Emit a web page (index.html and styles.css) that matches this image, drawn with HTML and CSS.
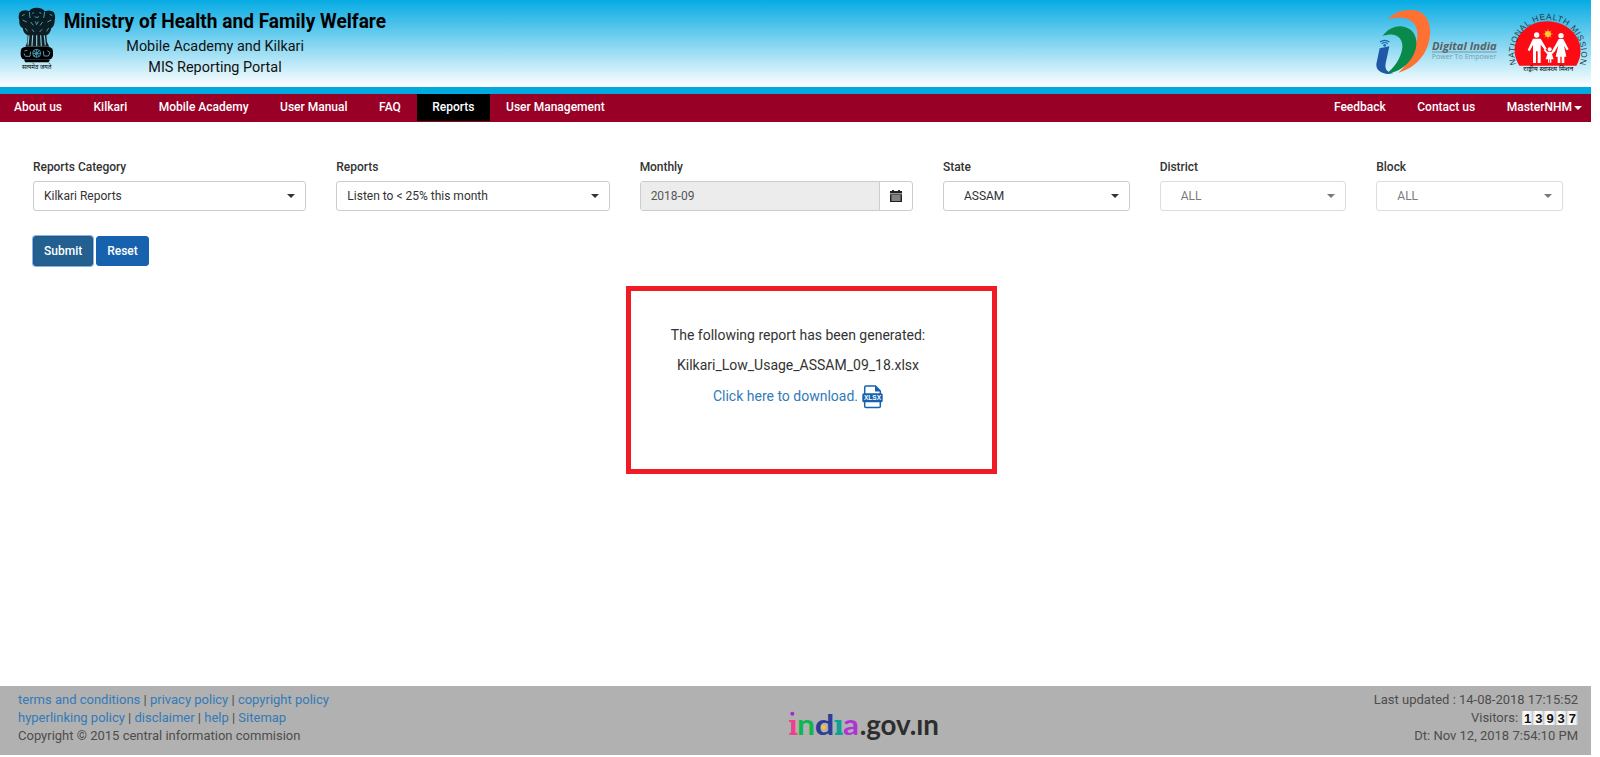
FILE: index.html
```html
<!DOCTYPE html>
<html lang="en">
<head>
<meta charset="utf-8">
<title>MIS Reporting Portal</title>
<link rel="stylesheet" href="styles.css">
</head>
<body>
<div class="page">
  <header class="banner">
    <svg class="brand" viewBox="0 0 1200 261" role="img" aria-label="Ministry of Health and Family Welfare">
      <g class="emblem">
        <path d="M88 34 Q92 23 110 23 Q128 23 134 34 Q150 28 161 36 Q168 48 164 62 Q164 78 154 84 Q150 104 139 106 L141 126 L148 140 L76 140 L82 126 L83 106 Q71 102 68 84 Q56 78 58 62 Q53 48 60 36 Q72 27 88 34Z" opacity=".85"/>
        <path d="M87 106 L84 136 M98 106 L96 138 M110 106 L110 138 M122 106 L124 138 M133 106 L136 136" class="gap"/>
        <path d="M97 40 L102 38 M118 38 L124 40 M104 50 Q110 55 117 50 M66 47 L74 43 M149 43 L157 47 M68 60 L80 66 M154 60 L142 66 M92 66 L100 76 M128 66 L120 76 M106 64 L110 74 L115 64 M88 36 L90 54 M134 36 L131 54 M76 84 L82 94 M146 84 L140 94 M96 88 L102 96 M126 88 L119 96" class="mark"/>
        <rect x="62" y="141" width="97" height="38" rx="14"/>
        <path d="M72 179 H150 L146 187 H76Z"/>
        <circle cx="110" cy="160" r="12" class="mark"/>
        <path d="M110 149 V171 M99 160 H121 M102 152 L118 168 M118 152 L102 168 M73 153 L82 151 M72 160 L76 169 L90 169 L92 155 M130 153 L132 168 L145 168 L150 158 L142 152" class="mark"/>
      </g>
      <text x="110" y="208" class="motto" textLength="88" lengthAdjust="spacingAndGlyphs" text-anchor="middle">सत्यमेव जयते</text>
      <text x="191" y="84" class="t1" textLength="967" lengthAdjust="spacingAndGlyphs">Ministry of Health and Family Welfare</text>
      <text x="379" y="154" class="t2" textLength="533" lengthAdjust="spacingAndGlyphs">Mobile Academy and Kilkari</text>
      <text x="445" y="216" class="t2" textLength="400" lengthAdjust="spacingAndGlyphs">MIS Reporting Portal</text>
    </svg>
    <svg class="partners" viewBox="0 0 723 261" role="img" aria-label="Digital India, National Health Mission">
      <path fill="#ff7033" d="M115 57 C132 37 165 27 194 31 C228 37 242 66 240 103 C237 152 205 202 145 218 C180 188 200 146 202 105 C203 70 180 43 115 57Z"/>
      <path fill="#098a4b" d="M98 108 C112 88 133 78 153 79 C184 82 202 104 199 134 C194 181 153 217 107 222 C132 205 153 175 157 143 C160 113 137 94 98 108Z"/>
      <path fill="#2057a7" d="M89 145 L118 139 L107 190 C104 207 109 216 130 220 C100 226 77 213 79 192Z"/>
      <path d="M90 126 Q104 116 118 126 M95 131 Q104 124 113 131" fill="none" stroke="#1c64af" stroke-width="3.5"/>
      <circle cx="104" cy="136" r="4" fill="#1c64af"/>
      <text x="246" y="151" class="di" textLength="194" lengthAdjust="spacingAndGlyphs">Digital India</text>
      <path d="M246 156 H440" stroke="#69767b" stroke-width="2"/>
      <text x="245" y="178" class="pe" textLength="194" lengthAdjust="spacingAndGlyphs">Power To Empower</text>
      <path fill="#fd0b14" d="M508 197 C468 135 517 64 592 64 C667 64 716 135 679 197Z"/>
      <circle cx="594" cy="102" r="9" fill="#ffd52b"/>
      <path d="M594 88 V116 M580 102 H608 M584 92 L604 112 M604 92 L584 112" stroke="#ffc72c" stroke-width="2"/>
      <g fill="#fff">
        <circle cx="560" cy="105" r="8"/><circle cx="633" cy="107" r="8"/><circle cx="599" cy="148" r="6"/>
        <path d="M549 116 H572 L590 146 L585 150 L572 134 V189 H563 V154 H558 V189 H549 V134 L539 154 L533 150Z"/>
        <path d="M626 117 H640 L656 148 L650 151 L642 137 L649 170 H643 V189 H635 V170 H631 V189 H623 V170 H617 L625 137 L612 157 L606 153Z"/>
        <path d="M593 155 H605 L614 147 L617 151 L606 163 L611 178 H604 V188 H600 V178 H598 V188 H594 V178 H587 L592 163 L581 151 L584 147Z"/>
      </g>
      <path id="arc" fill="none" d="M498 193 A100 104 0 1 1 690 190"/>
      <text class="nhm"><textPath href="#arc" textLength="382" lengthAdjust="spacing">NATIONAL HEALTH MISSION</textPath></text>
      <text x="595" y="213" class="hindi" text-anchor="middle" textLength="150" lengthAdjust="spacingAndGlyphs">राष्ट्रीय स्वास्थ्य मिशन</text>
    </svg>
  </header>

  <nav class="nav">
    <a>About us</a><a>Kilkari</a><a>Mobile Academy</a><a>User Manual</a><a>FAQ</a><a class="active">Reports</a><a>User Management</a>
    <span class="spacer"></span>
    <a>Feedback</a><a>Contact us</a><a class="user">MasterNHM<i class="caret"></i></a>
  </nav>

  <main>
    <form class="filters">
      <div class="field"><label>Reports Category</label><div class="select"><span>Kilkari Reports</span><i class="caret"></i></div></div>
      <div class="field"><label>Reports</label><div class="select"><span>Listen to &lt; 25% this month</span><i class="caret"></i></div></div>
      <div class="field"><label>Monthly</label>
        <div class="select date"><span class="value">2018-09</span>
          <span class="addon"><svg width="12" height="12" viewBox="0 0 12 12"><path fill="#222" d="M0 1H2V0H4V1H8V0H10V1H12V3.5H0Z M0 4.3H12V12H0Z"/><path fill="none" stroke="#fff" stroke-width=".5" d="M1 6H11M1 8H11M1 10H11M3 5V11M5 5V11M7 5V11M9 5V11"/></svg></span>
        </div>
      </div>
      <div class="field"><label>State</label><div class="select indent"><span>ASSAM</span><i class="caret"></i></div></div>
      <div class="field"><label>District</label><div class="select indent disabled"><span>ALL</span><i class="caret"></i></div></div>
      <div class="field"><label>Block</label><div class="select indent disabled"><span>ALL</span><i class="caret"></i></div></div>
    </form>
    <div class="actions"><button class="btn submit">Submit</button><button class="btn">Reset</button></div>

    <section class="result">
      <p>The following report has been generated:</p>
      <p>Kilkari_Low_Usage_ASSAM_09_18.xlsx</p>
      <p class="download"><a>Click here to download.</a>
        <svg width="21" height="24" viewBox="0 0 21 24"><path d="M2.7 9V2.2Q2.7 1 4 1H13.5L18.3 6V9M2.7 16V21.5Q2.7 22.5 4 22.5H17Q18.3 22.5 18.3 21.5V16" fill="none" stroke="#1762ae" stroke-width="1.5"/><path d="M13 .5V6.5H19Z" fill="#1762ae"/><rect x=".3" y="8.3" width="20.4" height="9" rx="1.5" fill="#1762ae"/><text x="10.5" y="15.3" text-anchor="middle" class="xl" textLength="17" lengthAdjust="spacing">XLSX</text></svg>
      </p>
    </section>
  </main>

  <footer class="footer">
    <div class="links">
      <div><a>terms and conditions</a> | <a>privacy policy</a> | <a>copyright policy</a></div>
      <div><a>hyperlinking policy</a> | <a>disclaimer</a> | <a>help</a> | <a>Sitemap</a></div>
      <div>Copyright © 2015 central information commision</div>
    </div>
    <svg class="gov" viewBox="0 0 570 171" role="img" aria-label="india.gov.in">
      <g class="govtext">
        <text x="57" y="110" fill="#ee3f91" textLength="26" lengthAdjust="spacingAndGlyphs">ı</text>
        <text x="81" y="110" fill="#0fb650" textLength="54" lengthAdjust="spacingAndGlyphs">n</text>
        <text x="192" y="110" fill="#0aa394" textLength="29" lengthAdjust="spacingAndGlyphs">ı</text>
        <text x="219" y="110" fill="#af32d5" textLength="48" lengthAdjust="spacingAndGlyphs">a</text>
        <text x="269" y="110" fill="#2d2d2d" textLength="238" lengthAdjust="spacingAndGlyphs">.gov.ın</text>
        <text x="134" y="110" fill="#2d3e96" textLength="59" lengthAdjust="spacingAndGlyphs">d</text>
      </g>
      <path d="M57 66H65V72H57ZM58 104H82V110H58Z" fill="#ee3f91"/>
      <path d="M194 66H203V72H194ZM195 104H219V110H195Z" fill="#0aa394"/>
      <circle cx="67" cy="47" r="6" fill="#a12bd1"/><circle cx="160" cy="88" r="7" fill="#ffc22d"/>
    </svg>
    <div class="stats">
      <div>Last updated : 14-08-2018 17:15:52</div>
      <div class="visitors">Visitors: <span class="counter"><b>1</b><b>3</b><b>9</b><b>3</b><b>7</b></span></div>
      <div>Dt: Nov 12, 2018 7:54:10 PM</div>
    </div>
  </footer>
</div>
</body>
</html>
```
FILE: styles.css
```css
* { box-sizing: border-box; }
body { margin: 0; background: #fff; font-family: Roboto, sans-serif; color: #333; }
.page { width: 1591px; height: 755px; display: flex; flex-direction: column; }
.banner { height: 94px; display: flex; justify-content: space-between; background: linear-gradient(#06abe3, #fff); background-size: 100% 87px; background-repeat: no-repeat; border-bottom: 7px solid #00a9e0; flex: none; }
.brand { width: 400px; height: 87px; overflow: visible; }
.partners { width: 241px; height: 87px; }
.mark, .gap { fill: none; stroke: #4a98b3; stroke-width: 3; }
.gap { stroke: #8bcbe0; stroke-width: 3.5; }
.t1 { font: 700 59px Roboto, sans-serif; }
.t2 { font: 400 46px Roboto, sans-serif; fill: #111; }
.motto { font: 400 17px "Noto Sans", sans-serif; }
.di { font: italic 700 32px "Open Sans", sans-serif; fill: #5b6063; }
.pe { font: 400 19px "Open Sans", sans-serif; fill: #7f9ba6; }
.nhm { font: 400 25px "Liberation Sans", sans-serif; fill: #263b43; }
.hindi { font: 400 17px "Noto Sans", sans-serif; }

.nav { height: 28px; flex: none; background: #990026; display: flex; }
.nav a { color: #fff; font-size: 12px; font-weight: 500; line-height: 26px; height: 27px; padding: 0 15.75px; white-space: nowrap; }
.nav a:first-child { padding-left: 14px; }
.nav .active { background: #000; }
.spacer { flex: 1; }
.nav .user { padding-right: 9px; }
.caret { border: 4px solid transparent; border-top-color: currentColor; border-bottom: 0; width: 0; height: 0; flex: none; }
.user .caret { display: inline-block; margin-left: 2px; vertical-align: middle; }

main { flex: 1; display: flex; flex-direction: column; padding: 37px 28px 0 33px; }
.filters { display: grid; grid-template-columns: repeat(3, 273.2fr) repeat(3, 186.6fr); gap: 30px; }
.field { min-width: 0; }
.field label { display: block; font-size: 12px; font-weight: 500; line-height: 17px; height: 22px; letter-spacing: -.04px; }
.select { height: 30px; border: 1px solid #ccc; border-radius: 3px; display: flex; align-items: center; justify-content: space-between; padding: 0 10px; font-size: 12px; line-height: 28px; }
.indent { padding-left: 20px; }
.disabled { opacity: .65; }
.date { padding: 0; color: #555; }
.date .value { flex: 1; background: #ececec; padding-left: 10px; border-right: 1px solid #ccc; }
.addon { width: 32px; display: flex; justify-content: center; align-items: center; padding-bottom: 1px; }
.actions { display: flex; gap: 3px; margin-top: 25px; }
.btn { height: 30px; padding: 0 10px; border: 1px solid #1762ae; border-radius: 3px; background: #1762ae; color: #fff; font: 500 12px Roboto, sans-serif; }
.submit { background: #23608f; border-color: #1f5a8a; box-shadow: 0 0 0 1px #8ab4f0; }
.result { width: 371px; height: 188px; margin: 20px 0 0 593px; border: 5px solid #f01b24; padding: 34px 27px 0 0; text-align: center; font-size: 14px; line-height: 20px; }
.result p { margin: 0 0 10px; }
.result a, .links a { color: #337ab7; }
.download { display: flex; justify-content: center; align-items: center; gap: 4px; }
.download svg { margin-top: 2px; }
.result .download { height: 22px; }
.xl { font: 700 6.5px "Liberation Sans", sans-serif; fill: #fff; }

.footer { height: 69px; background: #b1b1b1; display: flex; justify-content: space-between; padding: 5px 13px 0 18px; font-size: 13px; line-height: 18px; color: #4d4d4d; position: relative; flex: none; }
.gov { width: 190px; height: 57px; position: absolute; left: 770px; top: 12px; }
.govtext { font: 700 88px Lato, sans-serif; }
.stats { text-align: right; }
.visitors { display: flex; justify-content: flex-end; align-items: center; gap: 4px; height: 18px; }
.counter { display: flex; height: 14px; }
.counter b { width: 11.2px; background: linear-gradient(90deg, #ddd, #fff 25%, #eee 80%, #bbb); color: #111; font: 700 13px/15px "Liberation Sans", sans-serif; text-align: center; }
```
